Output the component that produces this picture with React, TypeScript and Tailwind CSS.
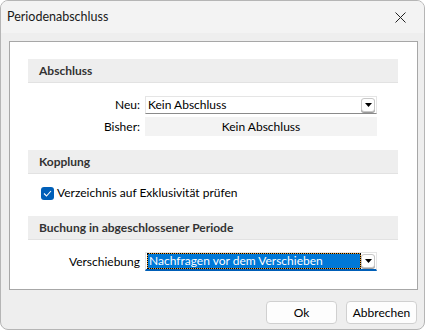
import React from "react";

const font = { fontFamily: 'Lato, "Noto Sans", sans-serif' };

function Arrow() {
  return (
    <div className="w-[14px] h-[14px] rounded-[3px] border border-[#c8c8c8] bg-white flex items-center justify-center shadow-[0_1px_0_#9a9a9a]">
      <svg width="7" height="4" viewBox="0 0 7 4">
        <path d="M0 0 L7 0 L3.5 4 Z" fill="#000" />
      </svg>
    </div>
  );
}

function Header({ children }: { children: React.ReactNode }) {
  return (
    <div className="h-[24px] bg-[#eeeeee] border-b border-[#e2e2e2] flex items-center pl-[11px] font-bold text-[12px] text-[#333]">
      {children}
    </div>
  );
}

export default function App() {
  return (
    <div className="w-[426px] h-[331px] bg-white text-[12px] text-black" style={font}>
      <div className="w-[425px] h-[330px] border border-[#b5b5b5] rounded-[8px] overflow-hidden bg-[#eeeeee] flex flex-col">
        <div className="h-[32px] bg-[#f3f3f3] flex items-center justify-between pl-[6px] pr-[18px]">
          <span className="text-[12.5px] text-[#1a1a1a]">Periodenabschluss</span>
          <svg width="11" height="11" viewBox="0 0 11 11">
            <path d="M0.5 0.5 L10.5 10.5 M10.5 0.5 L0.5 10.5" stroke="#222" strokeWidth="1" />
          </svg>
        </div>
        <div className="ml-[8px] mr-[6px] mt-[8px] h-[249px] bg-white border border-[#a7a7a7] pt-[17px] pl-[18px] pr-[19px]">
          <Header>Abschluss</Header>
          <div className="mt-[13px] flex items-center h-[18px]">
            <div className="w-[117px] text-right pr-[5px]">Neu:</div>
            <div className="w-[232px] h-[18px] border border-[#e5e5e5] border-b-[#8a8a8a] flex items-center justify-between pl-[2px] pr-[1px]">
              <span>Kein Abschluss</span>
              <Arrow />
            </div>
          </div>
          <div className="mt-[3px] flex items-center h-[19px]">
            <div className="w-[117px] text-right pr-[5px]">Bisher:</div>
            <div className="w-[232px] h-[19px] bg-[#f3f3f3] flex items-center justify-center">Kein Abschluss</div>
          </div>
          <div className="mt-[14px]">
            <Header>Kopplung</Header>
          </div>
          <div className="mt-[12px] flex items-center pl-[13px] h-[14px]">
            <div className="w-[13px] h-[13px] rounded-[3px] bg-[#005fb8] flex items-center justify-center">
              <svg width="9" height="7" viewBox="0 0 9 7">
                <path d="M1 3.5 L3.5 6 L8 1" stroke="#fff" strokeWidth="1.1" fill="none" />
              </svg>
            </div>
            <span className="ml-[3px]">Verzeichnis auf Exklusivität prüfen</span>
          </div>
          <div className="mt-[16px]">
            <Header>Buchung in abgeschlossener Periode</Header>
          </div>
          <div className="mt-[12px] flex items-center h-[19px]">
            <div className="w-[117px] text-right pr-[5px]">Verschiebung</div>
            <div className="w-[232px] h-[19px] border border-[#e5e5e5] border-b-2 border-b-[#005fb8] flex items-center justify-between pl-[1px] pr-[1px]">
              <div className="bg-[#f0a030] h-[16px] w-[214px]">
                <div className="h-[16px] w-[214px] border border-dotted border-black bg-[#0078d7] bg-clip-padding text-white flex items-center pl-[1px]">
                  Nachfragen vor dem Verschieben
                </div>
              </div>
              <Arrow />
            </div>
          </div>
        </div>
        <div className="flex justify-end gap-[9px] pr-[7px] mt-[11px]">
          <button className="w-[71px] h-[23px] rounded-[4px] border border-[#d0d0d0] bg-[#fdfdfd] text-[12px]">Ok</button>
          <button className="w-[71px] h-[23px] rounded-[4px] border border-[#d0d0d0] bg-[#fdfdfd] text-[12px]">Abbrechen</button>
        </div>
      </div>
    </div>
  );
}
